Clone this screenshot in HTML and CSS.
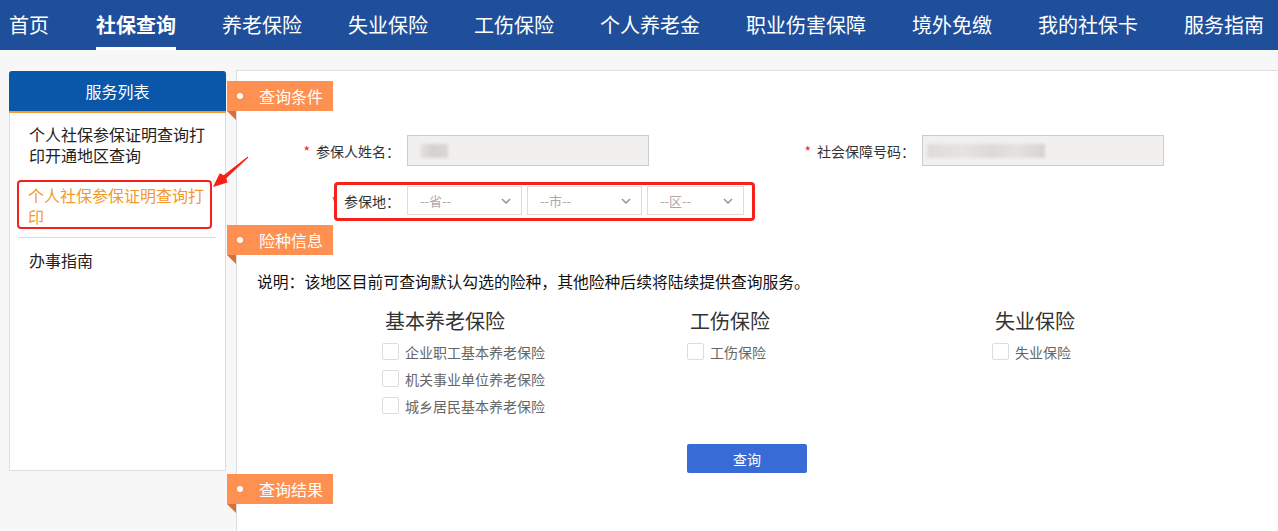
FILE: index.html
```html
<!DOCTYPE html>
<html lang="zh-CN">
<head>
    <meta charset="UTF-8">
    <title>社保查询</title>
    <link rel="stylesheet" href="styles.css">
</head>
<body>
    <header class="nav">
        <a class="nav-item">首页</a>
        <a class="nav-item active">社保查询</a>
        <a class="nav-item">养老保险</a>
        <a class="nav-item">失业保险</a>
        <a class="nav-item">工伤保险</a>
        <a class="nav-item">个人养老金</a>
        <a class="nav-item">职业伤害保障</a>
        <a class="nav-item">境外免缴</a>
        <a class="nav-item">我的社保卡</a>
        <a class="nav-item">服务指南</a>
    </header>

    <div class="page">
        <aside class="side">
            <div class="side-head">服务列表</div>
            <ul class="side-list">
                <li class="side-item">个人社保参保证明查询打印开通地区查询</li>
                <li class="side-item current">个人社保参保证明查询打印</li>
                <li class="side-sep"></li>
                <li class="side-item last">办事指南</li>
            </ul>
        </aside>

        <main class="main">
            <div class="ribbon"><span class="dot"></span>查询条件</div>
            <div class="form">
                <div class="form-row">
                    <div class="field">
                        <label class="label"><span class="req">*</span>参保人姓名：</label>
                        <div class="input"><span class="blur blur-name"></span></div>
                    </div>
                    <div class="field second">
                        <label class="label"><span class="req">*</span>社会保障号码：</label>
                        <div class="input"><span class="blur blur-id"></span></div>
                    </div>
                </div>
                <div class="form-row area">
                    <div class="field">
                        <label class="label"><span class="req">*</span>参保地：</label>
                        <div class="select w114"><span>--省--</span><svg width="10" height="6" viewBox="0 0 10 6"><path d="M1 1l4 4 4-4" fill="none" stroke="#999" stroke-width="1.6"/></svg></div>
                        <div class="select w114"><span>--市--</span><svg width="10" height="6" viewBox="0 0 10 6"><path d="M1 1l4 4 4-4" fill="none" stroke="#999" stroke-width="1.6"/></svg></div>
                        <div class="select w97"><span>--区--</span><svg width="10" height="6" viewBox="0 0 10 6"><path d="M1 1l4 4 4-4" fill="none" stroke="#999" stroke-width="1.6"/></svg></div>
                    </div>
                    <div class="mark-box"></div>
                </div>
            </div>

            <div class="ribbon"><span class="dot"></span>险种信息</div>
            <p class="note">说明：该地区目前可查询默认勾选的险种，其他险种后续将陆续提供查询服务。</p>
            <div class="cols">
                <div class="col">
                    <h3>基本养老保险</h3>
                    <div class="check"><span class="box"></span>企业职工基本养老保险</div>
                    <div class="check"><span class="box"></span>机关事业单位养老保险</div>
                    <div class="check"><span class="box"></span>城乡居民基本养老保险</div>
                </div>
                <div class="col">
                    <h3>工伤保险</h3>
                    <div class="check"><span class="box"></span>工伤保险</div>
                </div>
                <div class="col">
                    <h3>失业保险</h3>
                    <div class="check"><span class="box"></span>失业保险</div>
                </div>
            </div>
            <button type="button" class="btn">查询</button>

            <div class="ribbon"><span class="dot"></span>查询结果</div>
        </main>
    </div>

    <!-- red arrow pointing at the selected menu item -->
    <svg class="arrow" width="50" height="45" viewBox="0 0 50 45">
        <polygon points="42.7,6.6 18.7,25.2 14.7,23.3 8,37 22.5,32.5 21.3,28.2 43.3,7.4" fill="#f5221b"/>
    </svg>
</body>
</html>
```

FILE: styles.css
```css
* {
    margin: 0;
    padding: 0;
    box-sizing: border-box;
}

body {
    background: #f7f7f7;
    font-family: "Noto Sans CJK SC", "Microsoft YaHei", sans-serif;
    color: #333;
    position: relative;
    overflow: hidden;
    height: 531px;
}

.nav {
    height: 50px;
    background: #1f4f9b;
    display: flex;
    padding-left: 9px;
    gap: 46px;
}

.nav-item {
    color: #fff;
    font-size: 20px;
    line-height: 50px;
    position: relative;
    white-space: nowrap;
}

.nav-item:first-child {
    margin-right: 1px;
}

.nav-item.active {
    font-weight: bold;
}

.nav-item.active::after {
    content: "";
    position: absolute;
    left: 0;
    right: 0;
    bottom: 0;
    height: 3px;
    background: #fff;
}

.page {
    display: flex;
    align-items: flex-start;
    padding-top: 20px;
}

.side {
    flex-shrink: 0;
    margin-left: 9px;
    margin-top: 1px;
    width: 217px;
    height: 400px;
    background: #fff;
    border: 1px solid #ddd;
    border-top: none;
    border-radius: 3px 3px 0 0;
}

.side-head {
    height: 42px;
    background: #0a56a9;
    border-bottom: 2px solid #f39a2a;
    border-radius: 3px 3px 0 0;
    margin: 0 -1px;
    color: #fff;
    font-size: 16px;
    line-height: 40px;
    text-align: center;
}

.side-list {
    list-style: none;
    padding: 11px 9px 0 9px;
}

.side-item {
    font-size: 16px;
    line-height: 21px;
    padding: 0 10px;
    color: #222;
}

.side-item.current {
    margin: 14px 4px 0 -2px;
    padding: 3px 2px 0 9px;
    border: 2px solid #f5221b;
    border-radius: 4px;
    color: #f39a2a;
    height: 49px;
}

.side-sep {
    height: 1px;
    background: #ddd;
    margin-top: 8px;
}

.side-item.last {
    margin-top: 12px;
}

.main {
    flex: 1;
    min-width: 0;
    margin-left: 10px;
    height: 480px;
    background: #fff;
    border: 1px solid #ddd;
    border-right: none;
    border-bottom: none;
}

.ribbon {
    position: relative;
    margin-left: -10px;
    margin-top: 10px;
    width: 106px;
    height: 30px;
    background: #fe9051;
    color: #fff;
    font-size: 16px;
    line-height: 30px;
    padding-left: 32px;
    white-space: nowrap;
}

.ribbon::after {
    content: "";
    position: absolute;
    left: 0;
    top: 30px;
    border-style: solid;
    border-width: 0 9px 9px 0;
    border-color: transparent #d8703a transparent transparent;
}

.dot {
    position: absolute;
    left: 10px;
    top: 12px;
    width: 6px;
    height: 6px;
    border-radius: 50%;
    background: #fff;
}

.form {
    padding: 24px 0 0 13px;
}

.form-row {
    display: flex;
    position: relative;
}

.form-row.area {
    margin-top: 20px;
}

.field {
    display: flex;
    align-items: center;
    flex-shrink: 0;
}

.field.second {
    margin-left: 116px;
}

.label {
    width: 150px;
    margin-right: 0;
    text-align: right;
    font-size: 14px;
    color: #333;
}

.req {
    color: #f5222d;
    margin-right: 6px;
}

.input {
    width: 242px;
    height: 31px;
    margin-left: 7px;
    background: #f1f0ef;
    border: 1px solid #ccc;
    position: relative;
}

.blur {
    position: absolute;
    top: 8px;
    height: 14px;
    filter: blur(1.5px);
}

.blur-name {
    left: 12px;
    width: 28px;
    background: linear-gradient(90deg, #e6e4e3 0, #d4d2d1 40%, #d9d7d6 100%);
}

.blur-id {
    left: 4px;
    width: 118px;
    background: linear-gradient(90deg, #dedcdb 0, #e6e4e3 30%, #dcdad9 55%, #e4e2e1 75%, #d6d4d3 100%);
}

.select {
    height: 29px;
    border: 1px solid #ddd;
    background: #fff;
    display: flex;
    align-items: center;
    justify-content: space-between;
    padding: 0 10px 0 12px;
    font-size: 13px;
    color: #b0a8a8;
    margin-left: 7px;
    margin-right: -2px;
}

.w114 {
    width: 115px;
}

.w97 {
    width: 97px;
}

.mark-box {
    position: absolute;
    left: 84px;
    top: -4px;
    width: 421px;
    height: 39px;
    border: 3px solid #f5221b;
    border-radius: 4px;
}

.note {
    margin: 15px 0 0 20px;
    font-size: 15.8px;
    line-height: 24px;
    color: #111;
}

.cols {
    display: flex;
    padding-left: 145px;
    margin-top: 13px;
}

.col {
    flex: 0 0 305px;
}

.col h3 {
    font-size: 20px;
    font-weight: normal;
    line-height: 28px;
    padding-left: 3px;
    color: #333;
    margin-bottom: 3px;
}

.check {
    display: flex;
    align-items: center;
    height: 27px;
    font-size: 14px;
    color: #666;
}

.box {
    width: 17px;
    height: 17px;
    border: 1px solid #ddd;
    border-radius: 2px;
    margin-right: 6px;
    background: #fff;
}

.btn {
    display: block;
    margin: 25px 0 0 450px;
    width: 120px;
    height: 29px;
    border: none;
    border-radius: 2px;
    background: #386bd5;
    color: #fff;
    font-family: inherit;
    font-size: 14px;
}

.btn + .ribbon {
    margin-top: 1px;
}

.arrow {
    position: absolute;
    left: 205px;
    top: 150px;
}
```
